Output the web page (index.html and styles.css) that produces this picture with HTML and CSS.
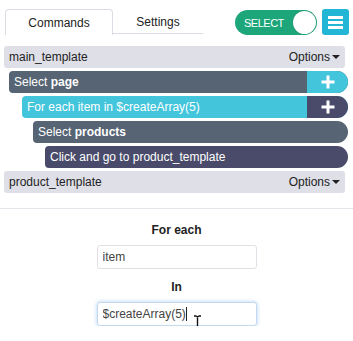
FILE: index.html
```html
<!DOCTYPE html>
<html lang="en">

<head>
  <meta charset="UTF-8" />
  <meta name="viewport" content="width=device-width, initial-scale=1.0" />
  <title>Template Editor</title>
  <link rel="stylesheet" href="styles.css">
</head>

<body>
  <div class="topo">
    <div class="abas">
      <div class="aba ativa">Commands</div>
      <div class="aba">Settings</div>
    </div>
    <div class="toggle">
      <span>SELECT</span>
      <div class="toggle-bola"></div>
    </div>
    <button class="menu-btn" aria-label="Menu">
      <span></span><span></span><span></span>
    </button>
  </div>

  <div class="arvore">
    <div class="template">
      <span>main_template</span>
      <span class="opcoes">Options <i class="seta"></i></span>
    </div>
    <div class="comando cinza nivel-1">
      <span>Select <b>page</b></span>
      <div class="mais azul"></div>
    </div>
    <div class="comando azul nivel-2">
      <span>For each item in $createArray(5)</span>
      <div class="mais escuro"></div>
    </div>
    <div class="comando cinza nivel-3">
      <span>Select <b>products</b></span>
    </div>
    <div class="comando escuro nivel-4">
      <span>Click and go to product_template</span>
    </div>
    <div class="template">
      <span>product_template</span>
      <span class="opcoes">Options <i class="seta"></i></span>
    </div>
  </div>

  <form class="formulario">
    <label for="item">For each</label>
    <input type="text" id="item" value="item" />
    <label for="lista">In</label>
    <div class="campo-foco">
      <input type="text" id="lista" class="focado" value="$createArray(5)" />
      <span class="caret"></span>
      <!-- cursor do mouse -->
      <svg class="cursor-texto" width="9" height="16" viewBox="0 0 9 16">
        <path d="M1 1h2.5M5.5 1H8M4.5 1.5v13M1 15h2.5M5.5 15H8M3.5 1.2l1 .8 1-.8M3.5 14.8l1-.8 1 .8" stroke="#111" stroke-width="1.4" fill="none" />
      </svg>
    </div>
  </form>
</body>

</html>
```

FILE: styles.css
```css
body {
  margin: 0;
  font-family: "Liberation Sans", Arial, sans-serif;
  background-color: #ffffff;
  color: #222;
  font-size: 12px;
}

/* Barra superior */
.topo {
  display: flex;
  align-items: flex-start;
  padding: 9px 4px 0 5px;
  height: 27px;
}

.abas {
  display: flex;
  width: 198px;
}

.aba {
  height: 25px;
  line-height: 26px;
  text-align: center;
  font-size: 12px;
  color: #222;
  box-sizing: border-box;
}

.aba.ativa {
  width: 108px;
  border: 1px solid #dcdce4;
  border-bottom: none;
  border-radius: 4px 4px 0 0;
  height: 26px;
}

.aba:not(.ativa) {
  width: 90px;
  border-bottom: 1px solid #dcdce4;
}

.toggle {
  margin-left: 32px;
  margin-top: 1px;
  width: 82px;
  height: 25px;
  border-radius: 13px;
  background-color: #1ea67b;
  display: flex;
  align-items: center;
  justify-content: space-between;
  padding: 0 1px 0 9px;
  box-sizing: border-box;
  color: #fff;
  font-size: 11px;
  letter-spacing: -0.5px;
}

.toggle-bola {
  width: 23px;
  height: 23px;
  border-radius: 50%;
  background-color: #fff;
  box-shadow: 0 0 1px rgba(0, 0, 0, 0.3);
}

.menu-btn {
  margin-left: 5px;
  width: 27px;
  height: 26px;
  border: none;
  border-radius: 3px;
  background-color: #21b6d6;
  display: flex;
  flex-direction: column;
  justify-content: center;
  align-items: center;
  gap: 2px;
  padding: 0;
}

.menu-btn span {
  display: block;
  width: 15px;
  height: 3px;
  background-color: #fff;
}

/* Arvore de templates */
.arvore {
  margin-top: 10px;
  display: flex;
  flex-direction: column;
  gap: 3px;
  padding: 0 5px 0 4px;
}

.template {
  height: 22px;
  background-color: #dfdfe8;
  border-radius: 3px;
  margin-right: 3px;
  display: flex;
  justify-content: space-between;
  align-items: center;
  padding: 0 5px 0 5px;
  font-size: 12px;
  color: #222;
}

.opcoes {
  display: flex;
  align-items: center;
}

.seta {
  display: inline-block;
  width: 0;
  height: 0;
  margin-left: 2px;
  border-left: 4px solid transparent;
  border-right: 4px solid transparent;
  border-top: 4px solid #222;
}

.comando {
  height: 22px;
  border-radius: 4px 11px 11px 4px;
  display: flex;
  justify-content: space-between;
  align-items: center;
  padding-left: 5px;
  color: #fff;
  font-size: 12px;
  overflow: hidden;
}

.comando.cinza { background-color: #566473; }
.comando.azul { background-color: #43c5dc; }
.comando.escuro { background-color: #4a4b6a; }

.nivel-1 { margin-left: 5px; }
.nivel-2 { margin-left: 18px; }
.nivel-3 { margin-left: 29px; }
.nivel-4 { margin-left: 41px; }

.mais {
  width: 41px;
  height: 22px;
  position: relative;
}

.mais.azul { background-color: #43c5dc; }
.mais.escuro { background-color: #4a4b6a; }

.mais::before,
.mais::after {
  content: "";
  position: absolute;
  background-color: #fff;
  left: 50%;
  top: 50%;
  transform: translate(-50%, -50%);
}

.mais::before {
  width: 13px;
  height: 3px;
}

.mais::after {
  width: 3px;
  height: 13px;
}

/* Formulario */
.formulario {
  margin-top: 15px;
  border-top: 1px solid #e4e4ea;
  display: flex;
  flex-direction: column;
  align-items: center;
  padding-top: 14px;
}

.formulario label {
  font-weight: bold;
  font-size: 12px;
  color: #222;
  margin-bottom: 8px;
}

.formulario input {
  width: 160px;
  height: 24px;
  border: 1px solid #e0e0e6;
  border-radius: 3px;
  padding: 0 5px;
  box-sizing: border-box;
  font-family: "Liberation Sans", Arial, sans-serif;
  font-size: 12px;
  color: #444;
  margin-bottom: 11px;
  outline: none;
}

.campo-foco {
  position: relative;
}

.formulario input.focado {
  border-color: #c5d9ee;
  box-shadow: 0 0 4px rgba(80, 150, 230, 0.45);
  margin-bottom: 0;
}

.caret {
  position: absolute;
  left: 89px;
  top: 5px;
  width: 1px;
  height: 14px;
  background-color: #222;
}

.cursor-texto {
  position: absolute;
  left: 96px;
  top: 13px;
}
```
